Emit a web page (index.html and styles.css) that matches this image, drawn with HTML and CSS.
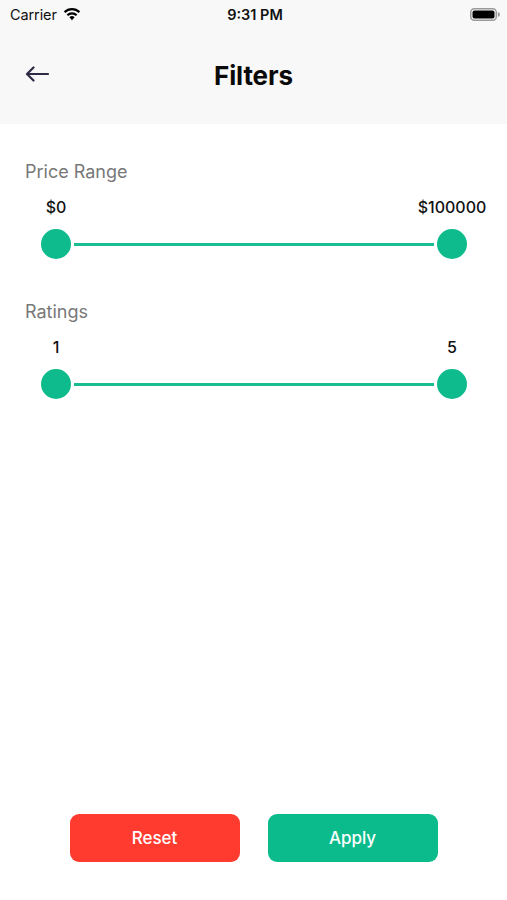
FILE: index.html
```html
<!DOCTYPE html>
<html>
<head>
<meta charset="utf-8">
<link rel="stylesheet" href="styles.css">
</head>
<body>
<div class="page">
  <header class="header">
    <div class="status">
      <div class="status-left">
        <span class="carrier">Carrier</span>
        <svg class="wifi" width="18" height="14" viewBox="0 0 18 14">
          <path d="M9 13.2 L6.4 10.2 A3.8 3.8 0 0 1 11.6 10.2 Z" fill="#000"/>
          <path d="M3.6 7.4 A7.6 7.6 0 0 1 14.4 7.4 L12.9 9.1 A5.4 5.4 0 0 0 5.1 9.1 Z" fill="#000"/>
          <path d="M0.8 4.3 A11.6 11.6 0 0 1 17.2 4.3 L15.7 6.0 A9.4 9.4 0 0 0 2.3 6.0 Z" fill="#000"/>
        </svg>
      </div>
      <span class="time">9:31 PM</span>
      <div class="status-right">
        <svg class="battery" width="30" height="13" viewBox="0 0 30 13">
          <rect x="0.75" y="0.75" width="25.5" height="11.5" rx="3.5" fill="none" stroke="#9a9a9a" stroke-width="1.5"/>
          <rect x="2.5" y="2.5" width="22" height="8" rx="2" fill="#000"/>
          <path d="M27.8 4.3 A2.2 2.2 0 0 1 27.8 8.7 Z" fill="#9a9a9a"/>
        </svg>
      </div>
    </div>
    <div class="nav">
      <svg class="back" width="24" height="16" viewBox="0 0 24 16">
        <path d="M23 8 H2.5 M8.5 1.5 L2 8 L8.5 14.5" fill="none" stroke="#2e2c44" stroke-width="2.2" stroke-linecap="round" stroke-linejoin="round"/>
      </svg>
      <h1 class="title">Filters</h1>
    </div>
  </header>

  <main class="content">
    <section class="filter">
      <div class="filter-label">Price Range</div>
      <div class="values">
        <span class="value">$0</span>
        <span class="value">$100000</span>
      </div>
      <div class="slider">
        <span class="thumb"></span>
        <span class="track"></span>
        <span class="thumb"></span>
      </div>
    </section>
    <section class="filter">
      <div class="filter-label">Ratings</div>
      <div class="values">
        <span class="value">1</span>
        <span class="value">5</span>
      </div>
      <div class="slider">
        <span class="thumb"></span>
        <span class="track"></span>
        <span class="thumb"></span>
      </div>
    </section>
  </main>

  <footer class="footer">
    <button class="btn btn-reset">Reset</button>
    <button class="btn btn-apply">Apply</button>
  </footer>
</div>
</body>
</html>
```

FILE: styles.css
```css
* { box-sizing: border-box; }
html, body { margin: 0; padding: 0; }
body {
  background: #ffffff;
  font-family: Inter, "Liberation Sans", sans-serif;
  color: #000;
}
.page {
  width: 507px;
  height: 900px;
  display: flex;
  flex-direction: column;
}
.header {
  background: #f8f8f8;
  height: 124px;
  display: flex;
  flex-direction: column;
}
.status {
  height: 28px;
  display: grid;
  grid-template-columns: 1fr auto 1fr;
  align-items: center;
  padding: 0 7px 0 10px;
}
.status-left {
  display: flex;
  align-items: center;
  gap: 6px;
}
.carrier {
  font-size: 14.5px;
  color: #111;
  letter-spacing: -0.1px;
}
.wifi { margin-top: -1px; }
.time {
  font-size: 14.5px;
  font-weight: 600;
  color: #111;
}
.status-right {
  display: flex;
  justify-content: flex-end;
}
.nav {
  flex: 1;
  display: flex;
  align-items: center;
  justify-content: center;
  padding-bottom: 2px;
  position: relative;
}
.back {
  position: absolute;
  left: 25px;
  top: 38px;
}
.title {
  margin: 0;
  font-size: 26px;
  font-weight: 700;
  color: #0a0a0a;
  letter-spacing: -0.1px;
}
.content {
  flex: 1;
  padding: 37px 40px 0 25px;
  display: flex;
  flex-direction: column;
  gap: 42px;
}
.filter {
  display: flex;
  flex-direction: column;
}
.filter-label {
  font-size: 18px;
  line-height: 22px;
  color: #787878;
}
.values {
  margin-top: 14px;
  margin-left: 16px;
  display: flex;
  justify-content: space-between;
  height: 20px;
}
.value {
  width: 30px;
  display: flex;
  justify-content: center;
  white-space: nowrap;
  font-size: 16px;
  font-weight: 500;
  line-height: 20px;
  color: #111;
}
.slider {
  margin-top: 12px;
  margin-left: 16px;
  display: flex;
  align-items: center;
  height: 30px;
}
.thumb {
  width: 30px;
  height: 30px;
  border-radius: 50%;
  background: #0dbb8c;
  flex: none;
}
.track {
  flex: 1;
  height: 3px;
  margin: 0 3px;
  background: #18bd92;
}
.footer {
  display: flex;
  justify-content: center;
  gap: 28px;
  padding: 0 0 38px 0;
}
.btn {
  width: 170px;
  height: 48px;
  border: none;
  border-radius: 9px;
  color: #fff;
  font-family: Inter, "Liberation Sans", sans-serif;
  font-size: 17px;
  font-weight: 500;
  display: flex;
  align-items: center;
  justify-content: center;
}
.btn-reset { background: #ff3b30; }
.btn-apply { background: #0bbb8c; }
```
